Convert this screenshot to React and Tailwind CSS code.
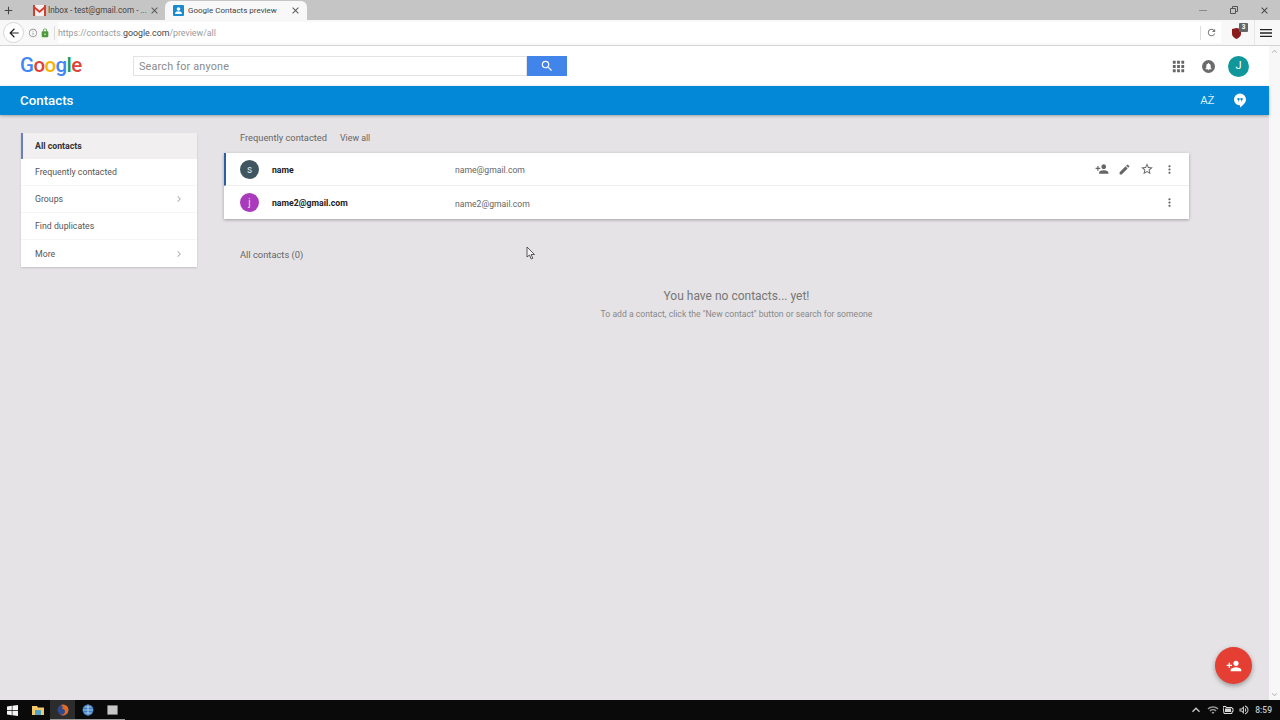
import { MdAdd, MdArrowBack, MdApps, MdClose, MdEdit, MdInfoOutline, MdKeyboardArrowRight, MdKeyboardArrowUp, MdKeyboardArrowDown, MdLock, MdMenu, MdMoreVert, MdNotifications, MdPersonAdd, MdRefresh, MdSearch, MdStarBorder, MdOutlineVolumeUp, MdWifi } from 'react-icons/md';

const menu = [
    { label: 'All contacts', active: true },
    { label: 'Frequently contacted' },
    { label: 'Groups', arrow: true },
    { label: 'Find duplicates' },
    { label: 'More', arrow: true },
];

function GmailIcon() {
    return (
        <svg width="13" height="11" viewBox="0 0 13 11">
            <rect x="0" y="0" width="13" height="11" fill="#f3f0f0" />
            <path d="M0 0h2v11H0zM11 0h2v11h-2z" fill="#d23f31" />
            <path d="M0 0l6.5 5.5L13 0v2.5L6.5 8 0 2.5z" fill="#d23f31" />
        </svg>
    );
}

function ContactsIcon() {
    return (
        <svg width="11" height="11" viewBox="0 0 11 11">
            <rect width="11" height="11" rx="1" fill="#1a8bd1" />
            <circle cx="5.5" cy="4" r="1.8" fill="#fff" />
            <path d="M2 9c0-2 1.7-2.7 3.5-2.7S9 7 9 9z" fill="#fff" />
        </svg>
    );
}

function Tabs() {
    return (
        <div className="h-5 bg-[#c6c5c6] flex items-end shrink-0">
            <div className="w-[25px] h-5 flex items-center pl-[2px]">
                <MdAdd className="text-[#444] text-[13px]" />
            </div>
            <div className="w-[140px] h-5 flex items-center pl-[8px] pr-[5px] gap-[2px]">
                <GmailIcon />
                <span className="text-[8.2px] text-[#444] flex-1 whitespace-nowrap pt-px">Inbox - test@gmail.com - ...</span>
                <MdClose className="text-[#555] text-[11px]" />
            </div>
            <div className="w-[142px] h-[19px] bg-[#f8f8f8] rounded-t-md flex items-center pl-[8px] pr-[6px] gap-[4px]">
                <ContactsIcon />
                <span className="text-[8px] text-[#444] flex-1 whitespace-nowrap pt-px">Google Contacts preview</span>
                <MdClose className="text-[#555] text-[11px]" />
            </div>
            <div className="ml-auto h-5 flex items-center text-[#555]">
                <div className="w-[8px] h-px bg-[#8a8a8a]"></div>
                <svg width="8" height="8" viewBox="0 0 8 8" className="ml-[23px]">
                    <path d="M0.500 2.500h5v5h-5zM2.500 2.500v-2h5v5h-2" fill="none" stroke="#555" strokeWidth="1" />
                </svg>
                <MdClose className="text-[#444] text-[11px] ml-[21px] mr-[10px]" />
            </div>
        </div>
    );
}

function Toolbar() {
    return (
        <div className="h-[26px] bg-[#f8f8f8] border-b border-[#d4d4d4] flex items-center shrink-0">
            <div className="ml-[3px] w-[21px] h-[21px] rounded-full border border-[#d6d6d6] bg-white flex items-center justify-center">
                <MdArrowBack className="text-[#222] text-[14px]" />
            </div>
            <MdInfoOutline className="ml-[4px] text-[#9a9a9a] text-[10px]" />
            <MdLock className="ml-[2px] text-[#4d9a3c] text-[10px]" />
            <div className="ml-[4px] w-px h-[14px] bg-[#dcdcdc]"></div>
            <div className="ml-[3px] flex-1 h-[21px] bg-white flex items-center text-[8.800px] text-[#9a9a9a]">
                <span className="pt-[2px]">https://contacts.</span><span className="text-[#444] pt-[2px]">google.com</span><span className="pt-[2px]">/preview/all</span>
                <div className="ml-auto w-px h-[14px] bg-[#dcdcdc]"></div>
                <div className="w-[20px] flex justify-center"><MdRefresh className="text-[#777] text-[11px]" /></div>
            </div>
            <div className="w-[33px] h-full flex items-center justify-center relative">
                <svg width="9" height="11" viewBox="0 0 9 11" className="mt-[2px] mr-[2px]">
                    <path d="M0 1l4.500-1L9 1v5c0 2.500-2.500 4-4.500 5C2.500 10 0 8.500 0 6z" fill="#8b1c1c" />
                </svg>
                <span className="absolute top-[3px] left-[18px] bg-[#666] text-white text-[6.500px] font-bold leading-[9px] w-[9px] text-center rounded-[1px]">3</span>
            </div>
            <div className="w-[26px] h-full border-l border-[#e6e6e6] flex items-center pl-[3px]">
                <MdMenu className="text-[#222] text-[16px]" />
            </div>
        </div>
    );
}

function Header() {
    return (
        <div className="h-10 bg-white flex items-center shrink-0 pl-5 pr-5">
            <div className="w-[113px] text-[20.500px] leading-none tracking-[-0.6px] -mt-[1px] font-medium">
                <span className="text-[#4285f4]">G</span>
                <span className="text-[#db4437]">o</span>
                <span className="text-[#f4b400]">o</span>
                <span className="text-[#4285f4]">g</span>
                <span className="text-[#0f9d58]">l</span>
                <span className="text-[#db4437]">e</span>
            </div>
            <div className="flex h-5">
                <div className="w-[394px] border border-[#e3e3e3] flex items-center pl-[5px] pt-[2px] text-[10.800px] text-[#8a8a8a] tracking-[0.2px]">Search for anyone</div>
                <div className="w-10 bg-[#4285ea] flex items-center justify-center">
                    <MdSearch className="text-white text-[14px]" />
                </div>
            </div>
            <MdApps className="ml-auto text-[#666] text-[17px]" />
            <div className="ml-[15px] w-[13px] h-[13px] rounded-full bg-[#6b6b6b] flex items-center justify-center">
                <MdNotifications className="text-white text-[9px]" />
            </div>
            <div className="ml-[13px] w-[21px] h-[21px] rounded-full bg-[#0f979b] flex items-center justify-center text-white text-[11px]">J</div>
        </div>
    );
}

function BlueBar() {
    return (
        <div className="h-[29px] bg-[#0288d6] shadow-[0_1px_3px_rgba(0,0,0,0.3)] flex items-center pl-5 text-white text-[13.300px] font-medium shrink-0 relative">
            Contacts
            <span className="ml-auto relative text-[11.500px] font-normal text-[#d6effa] tracking-[-0.3px]">
                AZ
                <svg width="10" height="14" viewBox="0 0 10 14" className="absolute left-[3px] top-0">
                    <path d="M1 12l1-1.500M7.500 3l1-1.500" stroke="#d6effa" strokeWidth="1" strokeDasharray="1 1" />
                </svg>
            </span>
            <svg width="14" height="15" viewBox="0 0 14 15" className="ml-[19px] mr-[22px]">
                <path d="M7 0.500a6 6 0 0 1 6 6c0 3.500-3.500 6-6 8v-2.200a5.900 5.900 0 0 1-6-5.800 6 6 0 0 1 6-6z" fill="#fff" />
                <path d="M4.500 5h2v2l-1 1.500H5L5.500 7h-1zM7.500 5h2v2l-1 1.500H8L8.500 7h-1z" fill="#0288d6" />
            </svg>
        </div>
    );
}

function Sidebar() {
    return (
        <div className="w-[176px] self-start bg-white shadow-[0_1px_2px_rgba(0,0,0,0.15)] text-[8.750px] text-[#555]">
            {menu.map((item) => (
                <div
                    key={item.label}
                    className={item.active
                        ? 'h-[26px] flex items-center pl-[12px] pr-3 border-l-2 border-[#6b80c4] bg-[#f1eff0] font-bold text-[#333]'
                        : 'h-[27px] flex items-center pl-[14px] pr-3 border-b border-[#f6f5f6] last:border-b-0'}
                >
                    <span className="flex-1 pt-[2px]">{item.label}</span>
                    {item.arrow && <MdKeyboardArrowRight className="text-[#b4b4b4] text-[12px]" />}
                </div>
            ))}
        </div>
    );
}

function ContactRow({ initial, color, name, email, selected }) {
    return (
        <div className={selected
            ? 'h-[33px] flex items-center border-l-2 border-[#2f5f9e] border-b border-b-[#efefef] pl-[14px]'
            : 'h-[33px] flex items-center pl-4'}
        >
            <div className="w-[19px] h-[19px] rounded-full flex items-center justify-center text-[#dfe6ea] text-[10px]" style={{ backgroundColor: color }}>{initial}</div>
            <div className="ml-[13px] w-[183px] pt-[3px] text-[8.700px] font-bold text-[#222]">{name}</div>
            <div className="pt-[3px] text-[8.650px] text-[#666] flex-1">{email}</div>
            {selected && (
                <div className="flex items-center text-[#666] gap-[9px] mr-[9px]">
                    <MdPersonAdd className="text-[14px]" />
                    <MdEdit className="text-[13px]" />
                    <MdStarBorder className="text-[14px]" />
                </div>
            )}
            <MdMoreVert className="text-[#666] text-[13px] mr-[13px]" />
        </div>
    );
}

function Cursor() {
    return (
        <svg width="10" height="14" viewBox="0 0 10 14" className="absolute left-[526px] top-[131px]">
            <path d="M1 1v10l2.500-2 1.700 4 1.600-.7-1.700-3.800H8.500z" fill="#f4f4f4" stroke="#333" strokeWidth="0.8" />
        </svg>
    );
}

function Taskbar() {
    return (
        <div className="h-5 bg-[#0a0a0a] flex items-center shrink-0 text-white">
            <div className="w-[25px] flex justify-center">
                <svg width="11" height="11" viewBox="0 0 11 11">
                    <path d="M0 1.500l4.800-.7v4.300H0zM5.400.7L11 0v5.100H5.400zM0 5.800h4.800v4.400L0 9.500zM5.400 5.800H11V11l-5.600-.8z" fill="#f4f4f4" />
                </svg>
            </div>
            <div className="w-[25px] flex justify-center">
                <svg width="12" height="11" viewBox="0 0 12 11">
                    <path d="M0 1h5l1 1.500h6V10H0z" fill="#f2c76a" />
                    <rect x="3" y="5" width="6" height="5" fill="#4fa3c7" />
                </svg>
            </div>
            <div className="w-[25px] h-5 bg-[#2c2c2c] flex justify-center items-center border-b border-[#999]">
                <svg width="12" height="12" viewBox="0 0 12 12">
                    <circle cx="6" cy="6" r="5.500" fill="#2c4a8c" />
                    <path d="M6 .5a5.500 5.500 0 0 1 5.500 5.500A5.500 5.500 0 0 1 3 10.600c2 .6 5-.4 5-3 0-1.800-1.500-3-3-2.800L6 3 4 1C4.600.7 5.300.5 6 .5z" fill="#e8681f" />
                </svg>
            </div>
            <div className="w-[25px] h-5 flex justify-center items-center border-b border-[#999]">
                <svg width="12" height="12" viewBox="0 0 12 12">
                    <circle cx="6" cy="6" r="5.500" fill="#3d7fc4" />
                    <path d="M1 6h10M6 .5v11M2.500 3h7M2.500 9h7" stroke="#d5e6f5" strokeWidth="0.7" />
                </svg>
            </div>
            <div className="w-[25px] h-5 flex justify-center items-center border-b border-[#999]">
                <div className="w-[11px] h-[10px] rounded-[1px] bg-[#c8c8c8] border border-[#777]"></div>
            </div>
            <div className="ml-auto flex items-center text-[#c8c8c8]">
                <MdKeyboardArrowUp className="text-[16px]" />
                <MdWifi className="text-[12px] ml-[3px] text-[#999]" />
                <svg width="12" height="8" viewBox="0 0 12 8" className="ml-[4px]">
                    <path d="M0 0.500h3v1h6v1h1v3H9v2H1z" fill="none" stroke="#d8d8d8" strokeWidth="1" />
                    <rect x="2" y="2.500" width="6" height="3.500" fill="#d8d8d8" />
                </svg>
                <MdOutlineVolumeUp className="text-[12px] ml-[3px]" />
                <span className="text-[8.500px] ml-[5px] mr-[8px] font-medium">8:59</span>
            </div>
        </div>
    );
}

export default function App() {
    return (
        <div className="w-[1280px] h-[720px] flex flex-col overflow-hidden relative font-['Roboto',sans-serif] bg-[#e5e3e6]">
            <Tabs />
            <Toolbar />
            <div className="flex-1 flex min-h-0">
                <div className="flex-1 flex flex-col min-w-0">
                    <Header />
                    <BlueBar />
                    <div className="flex-1 relative pt-[18px] pl-[21px] flex gap-[27px]">
                        <Sidebar />
                        <div className="w-[965px]">
                            <div className="h-[10px] mb-[10px] pl-4 flex items-baseline gap-[13px] text-[#666]">
                                <span className="text-[9.300px] leading-[10px]">Frequently contacted</span>
                                <span className="text-[8.800px] leading-[10px]">View all</span>
                            </div>
                            <div className="bg-white shadow-[0_1px_3px_rgba(0,0,0,0.3)]">
                                <ContactRow initial="s" color="#3f5660" name="name" email="name@gmail.com" selected />
                                <ContactRow initial="j" color="#a93abb" name="name2@gmail.com" email="name2@gmail.com" />
                            </div>
                            <div className="pl-4 mt-[29px] text-[9.350px] text-[#666] leading-[14px]">All contacts (0)</div>
                            <div className="mt-[26px] text-center pl-[60px]">
                                <div className="text-[12px] text-[#777] leading-4">You have no contacts... yet!</div>
                                <div className="mt-[4px] text-[8.650px] text-[#888] leading-3">To add a contact, click the "New contact" button or search for someone</div>
                            </div>
                        </div>
                        <Cursor />
                    </div>
                </div>
                <div className="w-[11px] bg-[#f7f7f7] flex flex-col items-center justify-between text-[#bbb]">
                    <MdKeyboardArrowUp className="text-[11px]" />
                    <MdKeyboardArrowDown className="text-[11px]" />
                </div>
            </div>
            <Taskbar />
            <div className="absolute left-[1215px] top-[647px] w-[37px] h-[37px] rounded-full bg-[#e53f33] shadow-[0_2px_5px_rgba(0,0,0,0.35)] flex items-center justify-center">
                <MdPersonAdd className="text-white text-[16px]" />
            </div>
        </div>
    );
}
